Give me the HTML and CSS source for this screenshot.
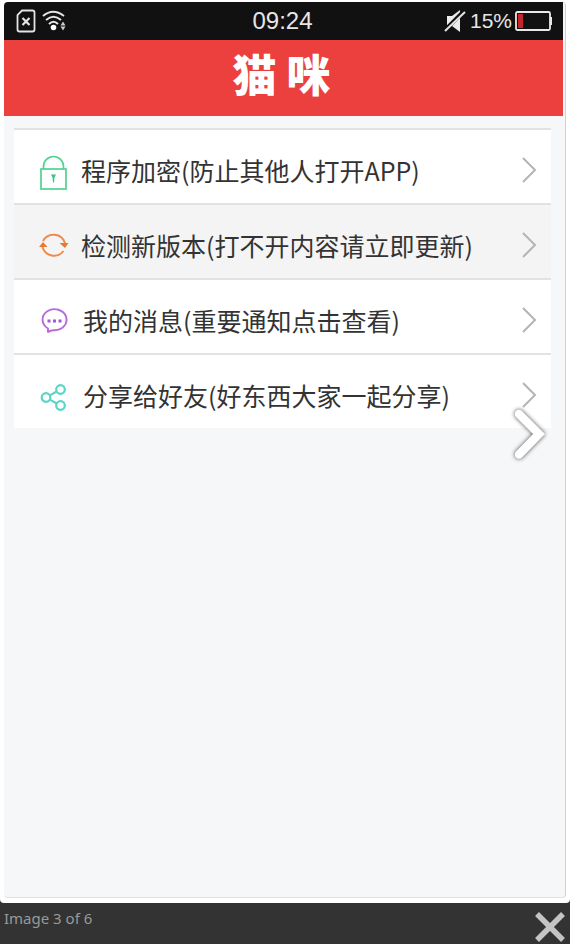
FILE: index.html
```html
<!DOCTYPE html>
<html lang="zh-CN">
<head>
<meta charset="utf-8">
<meta name="viewport" content="width=device-width, initial-scale=1">
<title>猫咪</title>
<link rel="stylesheet" href="styles.css">
</head>
<body>
<main class="frame">
  <div class="phone">
    <div class="status">
      <div class="status-side status-start">
        <svg width="20" height="24" viewBox="0 0 20 24" fill="none" stroke="#e4e4e4" stroke-width="1.8"><path d="M6 1.500H16.500Q18.500 1.500 18.500 3.500V20.500Q18.500 22.500 16.500 22.500H3.500Q1.500 22.500 1.500 20.500V6Z"/><path d="M6.500 9l7 7M13.500 9l-7 7" stroke-width="2.200"/></svg>
        <svg width="24" height="22" viewBox="0 0 24 22" fill="none" stroke="#e4e4e4" stroke-width="2"><path d="M1 6Q11 -2.500 22 6M4 10Q11.500 3.500 19 10M7 14Q11.500 9.500 16 14"/><circle cx="11.500" cy="17.500" r="2.800" fill="#fff" stroke="none"/><path d="M18.500 15.500l2.500-4 2.500 4zM18.500 16.500h5l-2.500 4z" fill="#ccc" stroke="none"/></svg>
      </div>
      <time class="clock">09:24</time>
      <div class="status-side status-end">
        <svg width="24" height="24" viewBox="0 0 24 24"><path d="M4 7h5l8-6v22l-8-6H4z" fill="#ececec"/><path d="M1 22L21 2" stroke="#111" stroke-width="4"/><path d="M2 22L22 3" stroke="#e4e4e4" stroke-width="2"/></svg>
        <span class="percent">15%</span>
        <svg width="38" height="20" viewBox="0 0 38 20"><rect x="1" y="1" width="34" height="18" rx="1.500" fill="none" stroke="#e8e8e8" stroke-width="1.800"/><path d="M35 6h2v8h-2z" fill="#e8e8e8"/><path d="M3 3h5v14H3z" fill="#c4262c"/></svg>
      </div>
    </div>
    <h1 class="title">猫 咪</h1>
    <nav class="menu">
      <a class="row" href="#lock">
        <svg class="icon" viewBox="0 -2 30 40" fill="none" stroke="#52d291" stroke-width="1.700"><rect x="2" y="17" width="25" height="20"/><path d="M4.500 17v-2.500a10 10 0 0 1 20 0v2.500"/><path d="M12 22.500h5l-1.500 3-.5 5h-1l-.5-5z" fill="#36c77d" stroke="none"/></svg>
        <span class="label">程序加密(防止其他人打开APP)</span>
        <svg class="arrow" viewBox="0 0 16 28"><path d="M2 2l12 12L2 26"/></svg>
      </a>
      <a class="row active" href="#update">
        <svg class="icon" viewBox="0 -2 30 40" fill="none" stroke="#ee8a4b" stroke-width="2"><path d="M4 14A12 12 0 0 1 26 16M24.500 24A12 12 0 0 1 3.500 20"/><path d="M20.500 16h9L26 21zM0 20h8.500L4 15z" fill="#ec7634" stroke="none"/></svg>
        <span class="label">检测新版本(打不开内容请立即更新)</span>
        <svg class="arrow" viewBox="0 0 16 28"><path d="M2 2l12 12L2 26"/></svg>
      </a>
      <a class="row wide" href="#messages">
        <svg class="icon" viewBox="0 -2 30 40" fill="none" stroke="#b66bdc" stroke-width="1.900"><path d="M9 26.500A12 10.500 0 1 1 15 28.200Q11.500 28 9 30Z" stroke-linejoin="round"/><path d="M8.500 17.500h3v3h-3zM14 17.500h3v3h-3zM19.500 17.500h3v3h-3z" fill="#a955d8" stroke="none"/></svg>
        <span class="label">我的消息(重要通知点击查看)</span>
        <svg class="arrow" viewBox="0 0 16 28"><path d="M2 2l12 12L2 26"/></svg>
      </a>
      <a class="row wide" href="#share">
        <svg class="icon" viewBox="0 -2 30 40" fill="none" stroke="#5bd3c6" stroke-width="2.200"><circle cx="7" cy="20.500" r="4.300"/><circle cx="21.500" cy="12.500" r="4.300"/><circle cx="21.500" cy="28.500" r="4.300"/><path d="M10.800 18.400l7-3.900M10.800 22.600l7 3.900"/></svg>
        <span class="label">分享给好友(好东西大家一起分享)</span>
        <svg class="arrow" viewBox="0 0 16 28"><path d="M2 2l12 12L2 26"/></svg>
      </a>
    </nav>
  </div>
  <button class="next" type="button" aria-label="Next"><svg width="50" height="64" viewBox="0 0 50 64"><path d="M17 14L37 34 17 54.500" fill="none" stroke="#fff" stroke-width="8.500" stroke-linecap="round"/></svg></button>
</main>
<footer class="caption">
  <span>Image 3 of 6</span>
  <button class="close" type="button" aria-label="Close"><svg width="30" height="30" viewBox="0 0 30 30"><path d="M2 2l26 26M28 2L2 28" stroke="#c4c4c4" stroke-width="5.500"/></svg></button>
</footer>
</body>
</html>
```
FILE: styles.css
```css
* { box-sizing: border-box; }

body {
  display: flex;
  flex-direction: column;
  min-height: 100vh;
  margin: 0;
  background: #333;
  font-family: "Noto Sans CJK SC", sans-serif;
}

svg { display: block; flex: none; }

button {
  padding: 0;
  border: 0;
  background: none;
  cursor: pointer;
}

.frame {
  position: relative;
  display: flex;
  flex: 1;
  padding: 2px 4px 5px;
  border-radius: 0 0 4px 4px;
  background: #fff;
}

.phone {
  flex: 1;
  border-right: 1px solid #cfd2d6;
  border-bottom: 1px solid #dfe1e3;
  border-radius: 4px;
  background: #f5f7f9;
}

.status {
  display: grid;
  grid-template-columns: 1fr auto 1fr;
  align-items: center;
  height: 38px;
  margin-right: 2px;
  padding: 0 10px 0 8px;
  border-radius: 4px 0 0;
  background: #111;
  color: #e6e6e6;
  font-family: "Liberation Sans", sans-serif;
}

.status-side {
  display: flex;
  align-items: center;
  gap: 6px;
}

.status-start { padding-left: 4px; }

.status-end {
  justify-content: flex-end;
  gap: 3px;
}

.clock { font-size: 24px; }

.percent { font-size: 21px; }

.title {
  height: 76px;
  margin: 0 2px 0 0;
  padding-right: 4px;
  background: #ec403e;
  color: #fff;
  font-size: 44px;
  font-weight: 900;
  line-height: 66px;
  text-align: center;
}

.menu {
  margin: 12px 14px 0 10px;
  background: #fff;
}

.row {
  display: flex;
  align-items: center;
  height: 75px;
  padding: 6px 14px 0 25px;
  border-top: 2px solid #e2e2e3;
  color: #333;
  font-size: 25px;
  text-decoration: none;
}

.active { background: #f4f4f4; }

.icon {
  width: 30px;
  height: 40px;
  margin-right: 12px;
}

.wide .icon { margin-right: 14px; }

.label {
  flex: 1;
  white-space: nowrap;
}

.arrow {
  width: 16px;
  height: 28px;
  fill: none;
  stroke: #b4b4b4;
  stroke-width: 2;
}

.next {
  position: absolute;
  top: 400px;
  right: 18px;
  filter: drop-shadow(0 0 2px #444);
}

.caption {
  display: flex;
  justify-content: space-between;
  height: 41px;
  padding: 3px 5px 2px 4px;
  color: #999;
  font-family: "Noto Sans", sans-serif;
  font-size: 15px;
  line-height: 24px;
}

.close { align-self: flex-end; }
```
